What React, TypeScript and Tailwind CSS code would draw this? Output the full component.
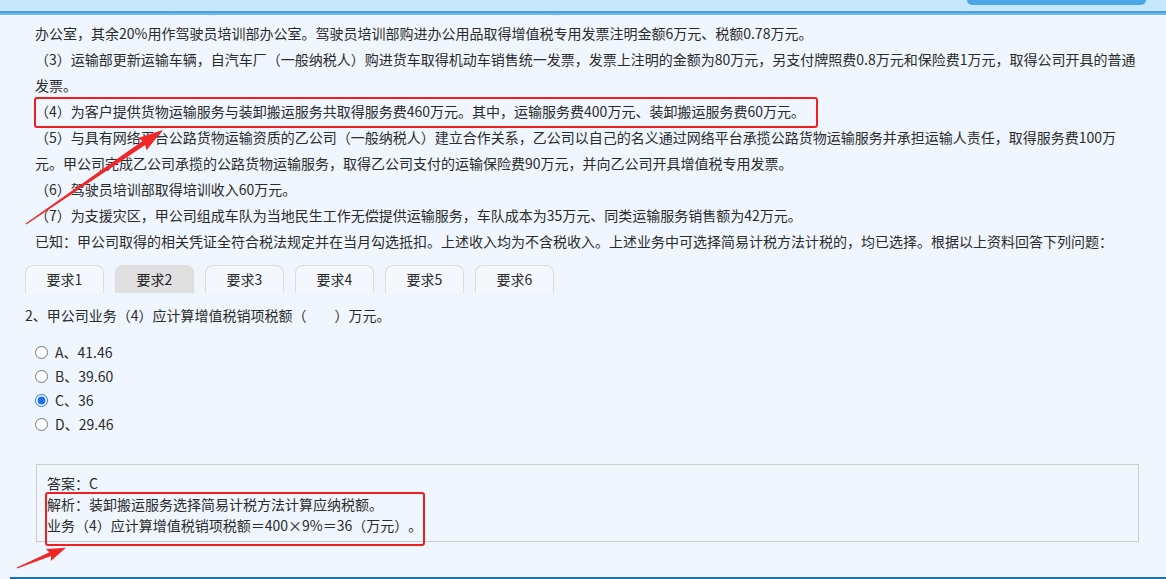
import { useState } from "react";

const lines = [
  "（2）甲公司购进一栋办公楼，取得增值税专用发票注明金额1000万元、税额90万元，其中80%用作运输部",
  "办公室，其余20%用作驾驶员培训部办公室。驾驶员培训部购进办公用品取得增值税专用发票注明金额6万元、税额0.78万元。",
  "（3）运输部更新运输车辆，自汽车厂（一般纳税人）购进货车取得机动车销售统一发票，发票上注明的金额为80万元，另支付牌照费0.8万元和保险费1万元，取得公司开具的普通",
  "发票。",
  "（4）为客户提供货物运输服务与装卸搬运服务共取得服务费460万元。其中，运输服务费400万元、装卸搬运服务费60万元。",
  "（5）与具有网络平台公路货物运输资质的乙公司（一般纳税人）建立合作关系，乙公司以自己的名义通过网络平台承揽公路货物运输服务并承担运输人责任，取得服务费100万",
  "元。甲公司完成乙公司承揽的公路货物运输服务，取得乙公司支付的运输保险费90万元，并向乙公司开具增值税专用发票。",
  "（6）驾驶员培训部取得培训收入60万元。",
  "（7）为支援灾区，甲公司组成车队为当地民生工作无偿提供运输服务，车队成本为35万元、同类运输服务销售额为42万元。",
  "已知：甲公司取得的相关凭证全符合税法规定并在当月勾选抵扣。上述收入均为不含税收入。上述业务中可选择简易计税方法计税的，均已选择。根据以上资料回答下列问题：",
];

const tabs = ["要求1", "要求2", "要求3", "要求4", "要求5", "要求6"];

const options = [
  { key: "A", text: "A、41.46" },
  { key: "B", text: "B、39.60" },
  { key: "C", text: "C、36" },
  { key: "D", text: "D、29.46" },
];

export default function App() {
  const [tab, setTab] = useState(1);
  const [choice, setChoice] = useState("C");

  return (
    <div
      className="relative flex h-[579px] w-[1166px] flex-col overflow-hidden bg-[#eff6fe] text-[14px] text-[#2b2b2b] [text-spacing-trim:space-all]"
      style={{ fontFamily: '"Noto Sans CJK SC", "Noto Sans", sans-serif' }}
    >
      {/* top bar */}
      <div className="relative z-10 h-[15px] shrink-0 bg-[#c6e6fb]">
        <div className="absolute left-[967px] top-0 h-[5px] w-[179px] rounded-b-[6px] bg-[#4aa6e6]" />
        <div className="absolute bottom-0 left-0 right-0 h-[4px] border-t-2 border-[#4b9fdc] bg-[#6db9ec]" />
      </div>

      <div className="overflow-hidden px-[35px] pt-[5px]">
        <div className="-mt-[26px] leading-[26px] whitespace-nowrap">
          {lines.map((l, i) => (
            <p key={i}>{l}</p>
          ))}
        </div>
      </div>

      {/* tabs */}
      <div className="ml-[25px] mt-[11px] flex gap-[11px]">
        {tabs.map((t, i) => (
          <button
            key={t}
            onClick={() => setTab(i)}
            className={
              "h-[28px] w-[79px] rounded-t-[8px] border border-b-0 border-[#dcdcdc] text-center leading-[27px] " +
              (i === tab ? "bg-[#e0e0e0] text-[#222]" : "bg-[#f4f8fc]")
            }
          >
            {t}
          </button>
        ))}
      </div>

      <p className="ml-[25px] mt-[9px] leading-[26px]">2、甲公司业务（4）应计算增值税销项税额（　　）万元。</p>

      <div className="ml-[35px] mt-[12px] flex flex-col">
        {options.map((o) => (
          <label key={o.key} className="flex h-[24px] items-center gap-[7px]">
            <input
              type="radio"
              name="q2"
              checked={choice === o.key}
              onChange={() => setChoice(o.key)}
              className="m-0 h-[13px] w-[13px] accent-[#1a73e8]"
            />
            <span>{o.text}</span>
          </label>
        ))}
      </div>

      <div className="ml-[36px] mt-[28px] h-[78px] w-[1103px] border border-[#cccccc] pl-[10px] pt-[8px] leading-[21px]">
        <p>答案：C</p>
        <p>解析：装卸搬运服务选择简易计税方法计算应纳税额。</p>
        <p>业务（4）应计算增值税销项税额＝400×9%＝36（万元）。</p>
      </div>

      <div className="ml-[10px] mt-auto h-[2px] bg-[#1a6fb5]" />

      {/* annotations */}
      <div className="pointer-events-none absolute left-[34px] top-[97px] h-[31px] w-[784px] rounded-[3px] border-2 border-[#f02020]" />
      <div className="pointer-events-none absolute left-[45px] top-[492px] h-[54px] w-[380px] rounded-[3px] border-2 border-[#f02020]" />
      <svg className="pointer-events-none absolute left-0 top-0" width="1166" height="579">
        <g transform="translate(26,224) rotate(-34.5)" fill="#f22626">
          <polygon points="0,-0.6 143,-2.4 141,-7.5 166,0 141,7.5 143,2.4 0,0.6" />
        </g>
        <g transform="translate(17,568) rotate(-22.6)" fill="#f22626">
          <polygon points="0,-0.6 36,-2 34,-6.5 53,0 34,6.5 36,2 0,0.6" />
        </g>
      </svg>
    </div>
  );
}
